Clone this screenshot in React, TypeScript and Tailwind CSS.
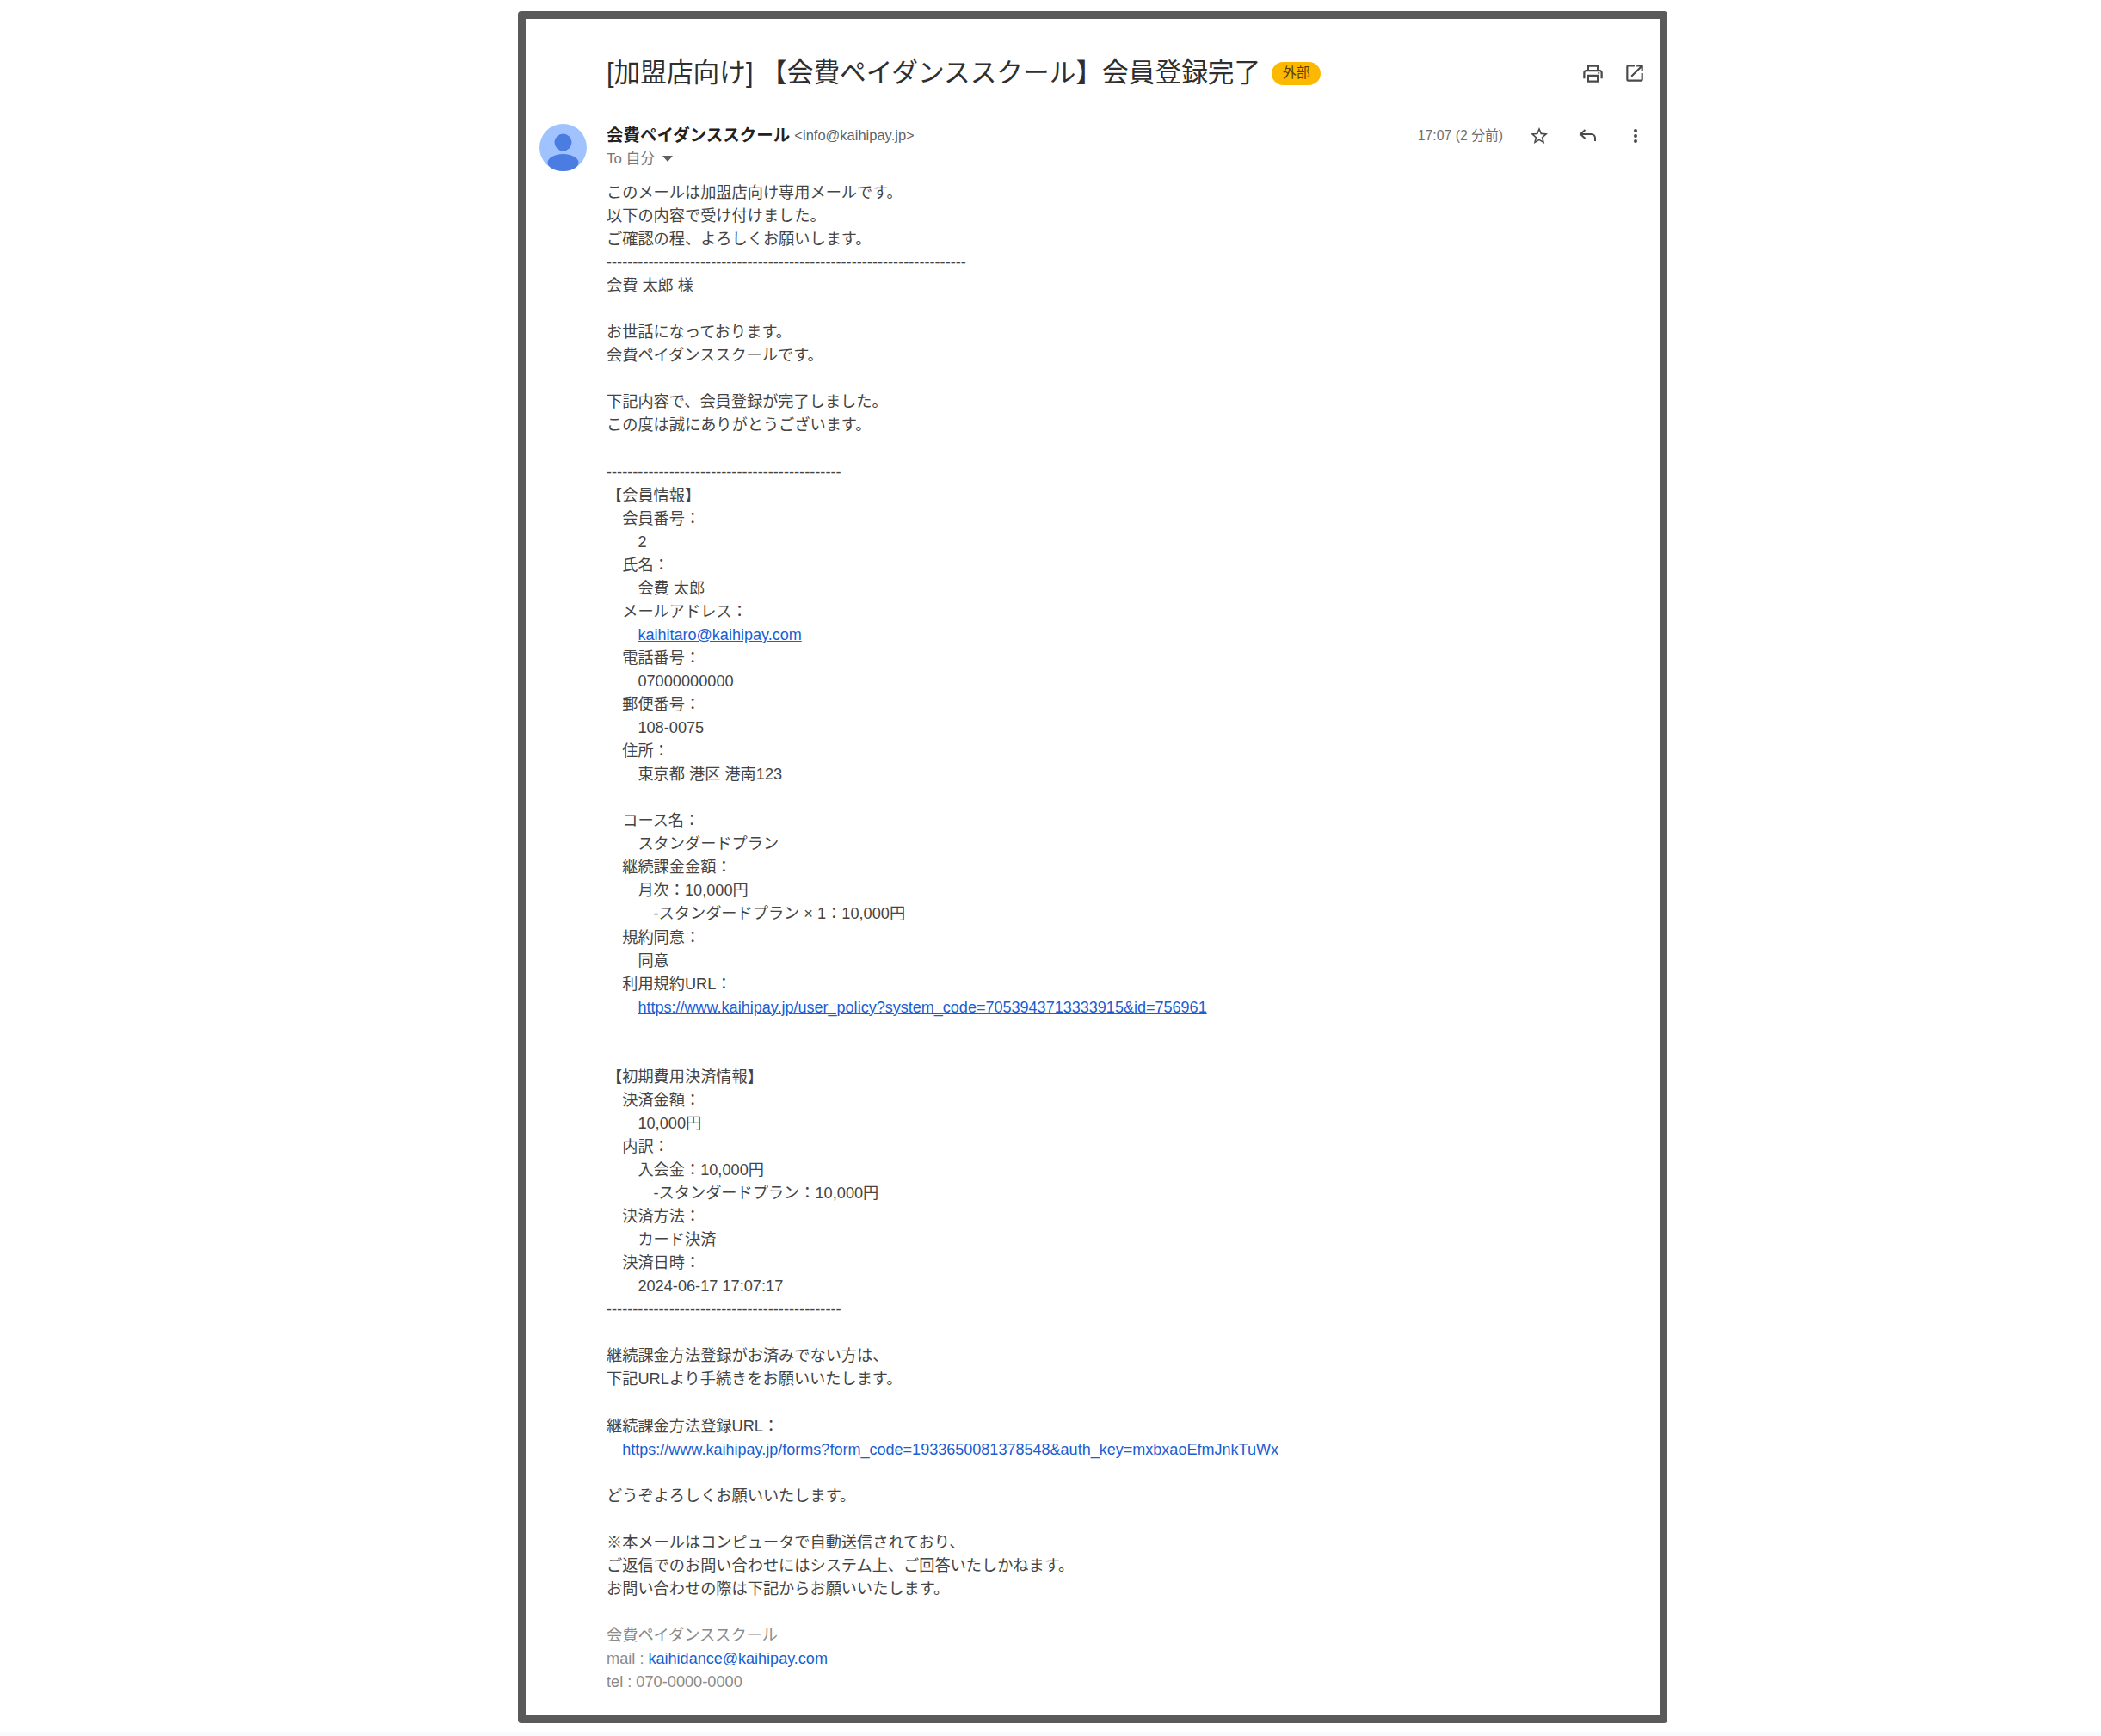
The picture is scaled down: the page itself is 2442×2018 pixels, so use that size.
const memberLines = [
  '【会員情報】',
  '　会員番号：',
  '　　2',
  '　氏名：',
  '　　会費 太郎',
  '　メールアドレス：',
];

const bodyAfterEmail = [
  '　電話番号：',
  '　　07000000000',
  '　郵便番号：',
  '　　108-0075',
  '　住所：',
  '　　東京都 港区 港南123',
  '',
  '　コース名：',
  '　　スタンダードプラン',
  '　継続課金金額：',
  '　　月次：10,000円',
  '　　　-スタンダードプラン × 1：10,000円',
  '　規約同意：',
  '　　同意',
  '　利用規約URL：',
];

const paymentLines = [
  '',
  '',
  '【初期費用決済情報】',
  '　決済金額：',
  '　　10,000円',
  '　内訳：',
  '　　入会金：10,000円',
  '　　　-スタンダードプラン：10,000円',
  '　決済方法：',
  '　　カード決済',
  '　決済日時：',
  '　　2024-06-17 17:07:17',
];

function Lines({ lines }: { lines: string[] }) {
  return (
    <>
      {lines.map((line, i) => (
        <div key={i} className="h-[27.06px]">
          {line}
        </div>
      ))}
    </>
  );
}

function Mail({ href }: { href: string }) {
  return <a className="text-[18.05px] text-[#1a5ed2] underline underline-offset-1">{href}</a>;
}

export default function App() {
  return (
    <div
      className="flex h-[2018px] flex-col bg-white"
      style={{ fontFamily: '"Liberation Sans", "Noto Sans CJK JP", sans-serif' }}
    >
      <div className="ml-[602px] mt-[13px] flex h-[1990px] w-[1336px] flex-col rounded-[4px] border-[9px] border-[#5a5a5a] bg-white">
        {/* Subject */}
        <div className="mt-[35px] flex h-[56px] items-center pl-[94px] pr-[16px]">
          <h1 className="text-[30.7px] font-normal leading-none whitespace-pre text-[#2f2f2f]">
            [加盟店向け] 【会費ペイダンススクール】会員登録完了
          </h1>
          <span className="ml-[13px] flex h-[27px] w-[57px] items-center justify-center rounded-full bg-[#fdb900] text-[16px] text-[#5a4400]">
            外部
          </span>
          <div className="ml-auto flex items-center gap-[22px] text-[#4a4a4a]">
            <svg className="h-[27px] w-[27px]" viewBox="0 0 24 24" fill="currentColor">
              <path d="M19 8h-1V3H6v5H5c-1.66 0-3 1.34-3 3v6h4v4h12v-4h4v-6c0-1.66-1.34-3-3-3zM8 5h8v3H8V5zm8 14H8v-4h8v4zm2-2v-4H6v4H4v-6c0-.55.45-1 1-1h14c.55 0 1 .45 1 1v6h-2z" />
              <circle cx="18" cy="11.5" r="1" />
            </svg>
            <svg className="h-[26px] w-[26px]" viewBox="0 0 24 24" fill="currentColor">
              <path d="M19 19H5V5h7V3H5a2 2 0 00-2 2v14a2 2 0 002 2h14c1.1 0 2-.9 2-2v-7h-2v7zM14 3v2h3.59l-9.83 9.83 1.41 1.41L19 6.41V10h2V3h-7z" />
            </svg>
          </div>
        </div>

        {/* Sender */}
        <div className="mt-[31px] flex pl-[16px] pr-[16px]">
          <svg className="h-[55px] w-[55px] shrink-0" viewBox="0 0 55 55">
            <circle cx="27.5" cy="27.5" r="27.5" fill="#a0c3ff" />
            <circle cx="27.5" cy="21.5" r="10" fill="#4a7ce2" />
            <ellipse cx="27.5" cy="45" rx="18" ry="10" fill="#4a7ce2" />
          </svg>
          <div className="ml-[23px] flex-1">
            <div className="flex h-[27px] items-center">
              <span className="text-[19.5px] font-bold text-[#222222]">会費ペイダンススクール</span>
              <span className="ml-[5px] text-[16.5px] text-[#5f6368]">&lt;info@kaihipay.jp&gt;</span>
              <span className="ml-auto text-[15.8px] text-[#6f6f6f]">17:07 (2 分前)</span>
              <div className="ml-[30px] flex items-center text-[#4a4a4a]">
                <svg className="h-[24px] w-[24px]" viewBox="0 0 24 24" fill="currentColor">
                  <path d="M22 9.24l-7.19-.62L12 2 9.19 8.63 2 9.24l5.46 4.73L5.82 21 12 17.27 18.18 21l-1.63-7.03L22 9.24zM12 15.4l-3.76 2.27 1-4.28-3.32-2.88 4.38-.38L12 6.1l1.71 4.04 4.38.38-3.32 2.88 1 4.28L12 15.4z" />
                </svg>
                <svg className="ml-[32px] h-[24px] w-[24px]" viewBox="0 0 24 24" fill="none" stroke="currentColor" strokeWidth="2">
                  <path d="M21 18v-3.5a4.500 4.500 0 00-4.500-4.500H4.500M9.500 5l-5.500 5 5.500 5" />
                </svg>
                <svg className="ml-[32px] h-[24px] w-[24px]" viewBox="0 0 24 24" fill="currentColor">
                  <circle cx="12" cy="6" r="2" />
                  <circle cx="12" cy="12" r="2" />
                  <circle cx="12" cy="18" r="2" />
                </svg>
              </div>
            </div>
            <div className="flex h-[27px] items-center text-[16.8px] text-[#777777]">
              To 自分
              <svg className="ml-[9px] h-[7px] w-[12px]" viewBox="0 0 12 7" fill="#5f5f5f">
                <path d="M0 0h12L6 7z" />
              </svg>
            </div>
          </div>
        </div>

        {/* Body */}
        <div className="mt-[12px] pl-[94px] pr-[14px] text-[18.2px] leading-[27.06px] whitespace-pre text-[#444444]">
          <Lines
            lines={[
              'このメールは加盟店向け専用メールです。',
              '以下の内容で受け付けました。',
              'ご確認の程、よろしくお願いします。',
              '---------------------------------------------------------------------',
              '会費 太郎 様',
              '',
              'お世話になっております。',
              '会費ペイダンススクールです。',
              '',
              '下記内容で、会員登録が完了しました。',
              'この度は誠にありがとうございます。',
              '',
              '---------------------------------------------',
            ]}
          />
          <Lines lines={memberLines} />
          <div>　　<Mail href="kaihitaro@kaihipay.com" /></div>
          <Lines lines={bodyAfterEmail} />
          <div>　　<Mail href="https://www.kaihipay.jp/user_policy?system_code=7053943713333915&id=756961" /></div>
          <Lines lines={paymentLines} />
          <Lines
            lines={[
              '---------------------------------------------',
              '',
              '継続課金方法登録がお済みでない方は、',
              '下記URLより手続きをお願いいたします。',
              '',
              '継続課金方法登録URL：',
            ]}
          />
          <div>　<Mail href="https://www.kaihipay.jp/forms?form_code=1933650081378548&auth_key=mxbxaoEfmJnkTuWx" /></div>
          <Lines
            lines={[
              '',
              'どうぞよろしくお願いいたします。',
              '',
              '※本メールはコンピュータで自動送信されており、',
              'ご返信でのお問い合わせにはシステム上、ご回答いたしかねます。',
              'お問い合わせの際は下記からお願いいたします。',
              '',
            ]}
          />
          <div className="text-[#8a8a8a]">
            <div>会費ペイダンススクール</div>
            <div>mail : <Mail href="kaihidance@kaihipay.com" /></div>
            <div>tel : 070-0000-0000</div>
          </div>
        </div>
      </div>
      <div className="mt-[10px] flex-1 bg-[#f8fafd]" />
    </div>
  );
}
